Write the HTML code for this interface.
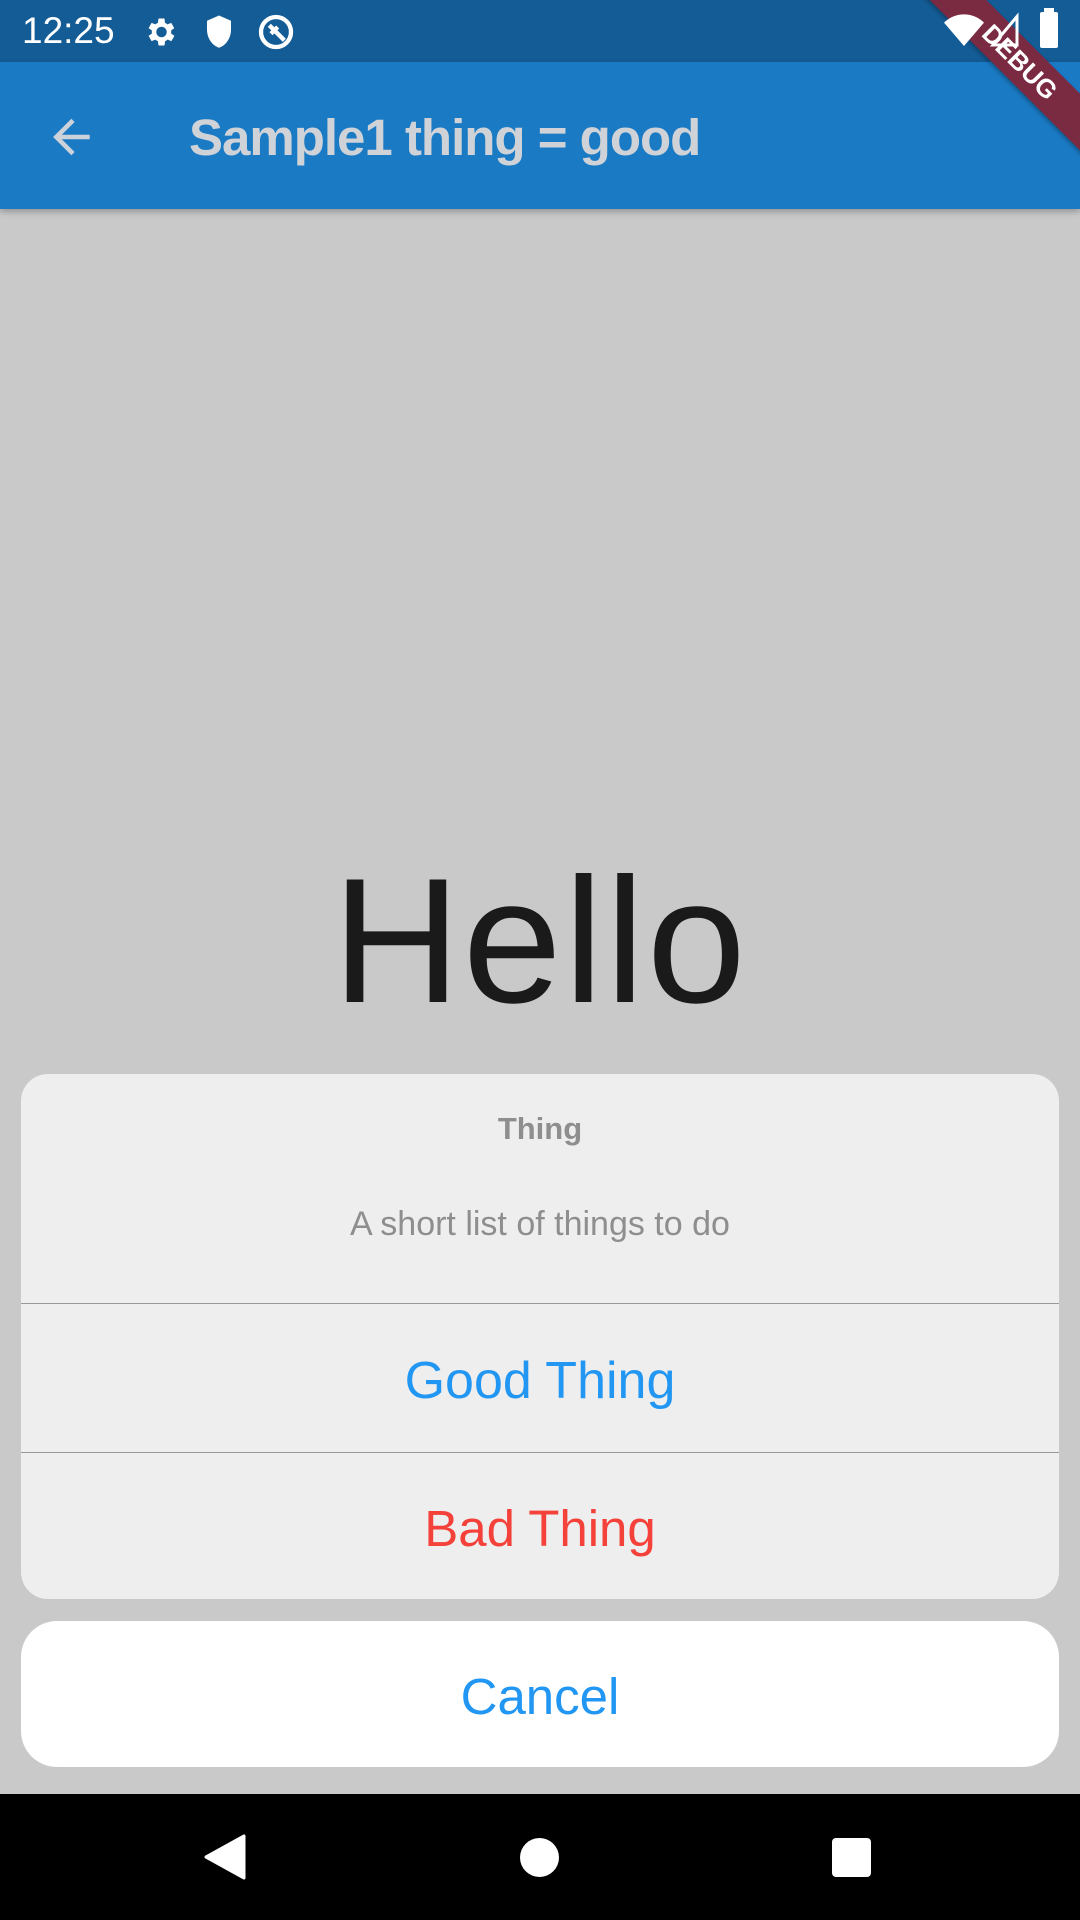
<!DOCTYPE html>
<html><head><meta charset="utf-8"><style>
*{margin:0;padding:0;box-sizing:border-box}
body{width:1080px;height:1920px;overflow:hidden;background:#c9c9c9;font-family:"Liberation Sans",sans-serif;position:relative}
.abs{position:absolute}
.c{text-align:center;left:0;width:1080px;white-space:nowrap}
</style></head><body>
<div class="abs" style="top:0;left:0;width:1080px;height:62px;background:#145c95"></div>
<div class="abs" style="top:62px;left:0;width:1080px;height:147px;background:#1b7ac4;box-shadow:0 3px 6px rgba(0,0,0,.25)"></div>
<div class="abs" style="left:870px;top:42px;width:300px;height:40px;background:#7a2a41;transform:rotate(45deg);color:#fff;font-weight:bold;font-size:26px;text-align:center;line-height:40px;box-shadow:0 2px 4px rgba(0,0,0,.3)">DEBUG</div>
<div class="abs" style="left:22px;top:10px;font-size:37px;color:#fff;line-height:42px">12:25</div>
<svg class="abs" style="left:142px;top:14px" width="36" height="36" viewBox="0 0 24 24"><path fill="#fff" d="M19.4 13a7.5 7.5 0 000-2l2.1-1.6-2-3.5-2.5 1a7 7 0 00-1.7-1L15 3h-4l-.4 2.9a7 7 0 00-1.7 1l-2.5-1-2 3.5L6.6 11a7.5 7.5 0 000 2l-2.2 1.6 2 3.5 2.5-1a7 7 0 001.7 1L11 21h4l.4-2.9a7 7 0 001.7-1l2.5 1 2-3.5zM13 15.5a3.5 3.5 0 110-7 3.5 3.5 0 010 7z"/></svg>
<svg class="abs" style="left:204px;top:14px" width="30" height="36" viewBox="0 0 20 24"><path fill="#fff" d="M10 1L2 4.5v6c0 5.5 3.4 10.5 8 12 4.6-1.5 8-6.5 8-12v-6z"/></svg>
<svg class="abs" style="left:256px;top:12px" width="40" height="40" viewBox="0 0 24 24"><circle cx="12" cy="12" r="9" fill="none" stroke="#fff" stroke-width="2.6"/><path d="M8 8l9 9M9 13l4-4" stroke="#fff" stroke-width="2.6" fill="none"/></svg>
<svg class="abs" style="left:944px;top:14px" width="40" height="34" viewBox="0 0 24 20"><path fill="#fff" d="M0 5a17 17 0 0124 0L12 19z"/></svg>
<svg class="abs" style="left:990px;top:12px" width="30" height="36" viewBox="0 0 20 24"><path fill="none" stroke="#fff" stroke-width="2" d="M2 22L18 3v19z"/></svg>
<div class="abs" style="left:1040px;top:12px;width:18px;height:36px;background:#fff;border-radius:2px"></div>
<div class="abs" style="left:1044px;top:8px;width:10px;height:6px;background:#fff"></div>
<svg class="abs" style="left:48px;top:112px" width="50" height="50" viewBox="0 0 24 24"><path d="M20 12H5M12 4l-8 8 8 8" fill="none" stroke="#ccd2da" stroke-width="2.2"/></svg>
<div class="abs" style="left:189px;top:108px;font-size:51px;font-weight:bold;color:#cfd3d8;line-height:60px;letter-spacing:-1px">Sample1 thing = good</div>
<div class="abs c" style="top:851px;font-size:178px;line-height:180px;color:#1a1a1a;letter-spacing:2px">Hello</div>
<div class="abs" style="left:21px;top:1074px;width:1038px;height:525px;background:#eeeeee;border-radius:27px;overflow:hidden">
 <div class="abs" style="left:0;top:229px;width:1038px;height:1px;background:#999"></div>
 <div class="abs" style="left:0;top:378px;width:1038px;height:1px;background:#999"></div>
 <div class="abs" style="left:0;width:1038px;text-align:center;top:37px;font-size:31px;font-weight:bold;color:#8e8e8e">Thing</div>
 <div class="abs" style="left:0;width:1038px;text-align:center;top:131px;font-size:34px;color:#8e8e8e">A short list of things to do</div>
 <div class="abs" style="left:0;width:1038px;text-align:center;top:277px;font-size:52px;color:#2196f3">Good Thing</div>
 <div class="abs" style="left:0;width:1038px;text-align:center;top:425px;font-size:51px;color:#f4413a">Bad Thing</div>
</div>
<div class="abs" style="left:21px;top:1621px;width:1038px;height:146px;background:#fff;border-radius:36px"></div>
<div class="abs c" style="top:1667px;font-size:51px;color:#2196f3">Cancel</div>
<div class="abs" style="left:0;top:1794px;width:1080px;height:126px;background:#000"></div>
<svg class="abs" style="left:204px;top:1834px" width="42" height="46" viewBox="0 0 42 46"><path d="M40 2v42L2 23z" fill="#fff" stroke="#fff" stroke-width="3" stroke-linejoin="round"/></svg>
<div class="abs" style="left:520px;top:1838px;width:39px;height:39px;border-radius:50%;background:#fff"></div>
<div class="abs" style="left:832px;top:1838px;width:39px;height:39px;border-radius:4px;background:#fff"></div>
</body></html>
